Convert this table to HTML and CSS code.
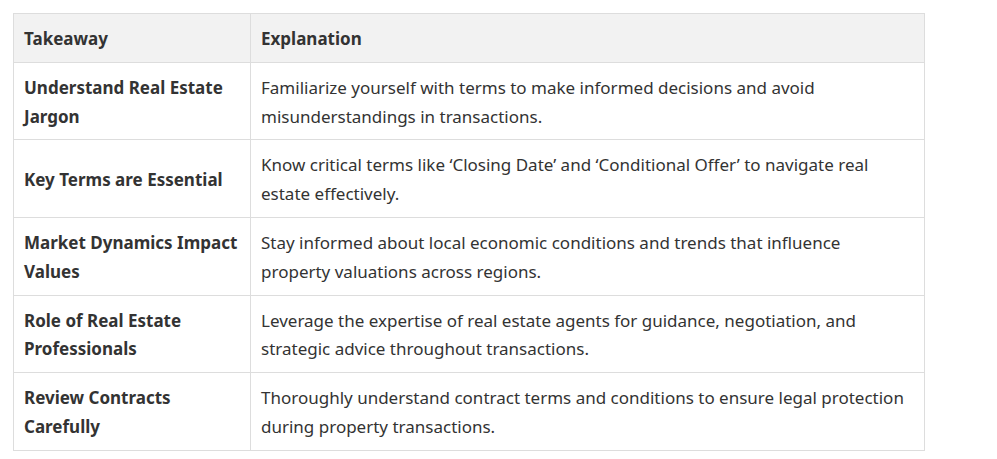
FILE: index.html
```html
<!DOCTYPE html>
<html lang="en">
<head>
<meta charset="utf-8">
<title>Key Takeaways</title>
<link rel="stylesheet" href="styles.css">
</head>
<body>
<div class="wrap">
<table class="takeaways">
<thead>
<tr><th class="col-a">Takeaway</th><th>Explanation</th></tr>
</thead>
<tbody>
<tr><td class="key">Understand Real Estate Jargon</td><td>Familiarize yourself with terms to make informed decisions and avoid misunderstandings in transactions.</td></tr>
<tr><td class="key">Key Terms are Essential</td><td>Know critical terms like ‘Closing Date’ and ‘Conditional Offer’ to navigate real estate effectively.</td></tr>
<tr><td class="key">Market Dynamics Impact Values</td><td>Stay informed about local economic conditions and trends that influence property valuations across regions.</td></tr>
<tr><td class="key">Role of Real Estate Professionals</td><td>Leverage the expertise of real estate agents for guidance, negotiation, and strategic advice throughout transactions.</td></tr>
<tr><td class="key">Review Contracts Carefully</td><td>Thoroughly understand contract terms and conditions to ensure legal protection during property transactions.</td></tr>
</tbody>
</table>
</div>
</body>
</html>
```
FILE: styles.css
```css
html, body {
  margin: 0;
  padding: 0;
  background: #ffffff;
}
.wrap {
  padding: 13px 0 0 13px;
}
.takeaways {
  width: 912px;
  border-collapse: collapse;
  font-family: "Noto Sans", "Open Sans", sans-serif;
  font-size: 17px;
  line-height: 28.8px;
  color: #333333;
}
.takeaways th,
.takeaways td {
  border: 1px solid #dddddd;
  padding: 11px 10px 8px;
  text-align: left;
  vertical-align: middle;
}
.takeaways th {
  background: #f2f2f2;
  font-weight: 700;
}
.takeaways .col-a {
  width: 216px;
}
.takeaways .key {
  font-weight: 700;
}
```
